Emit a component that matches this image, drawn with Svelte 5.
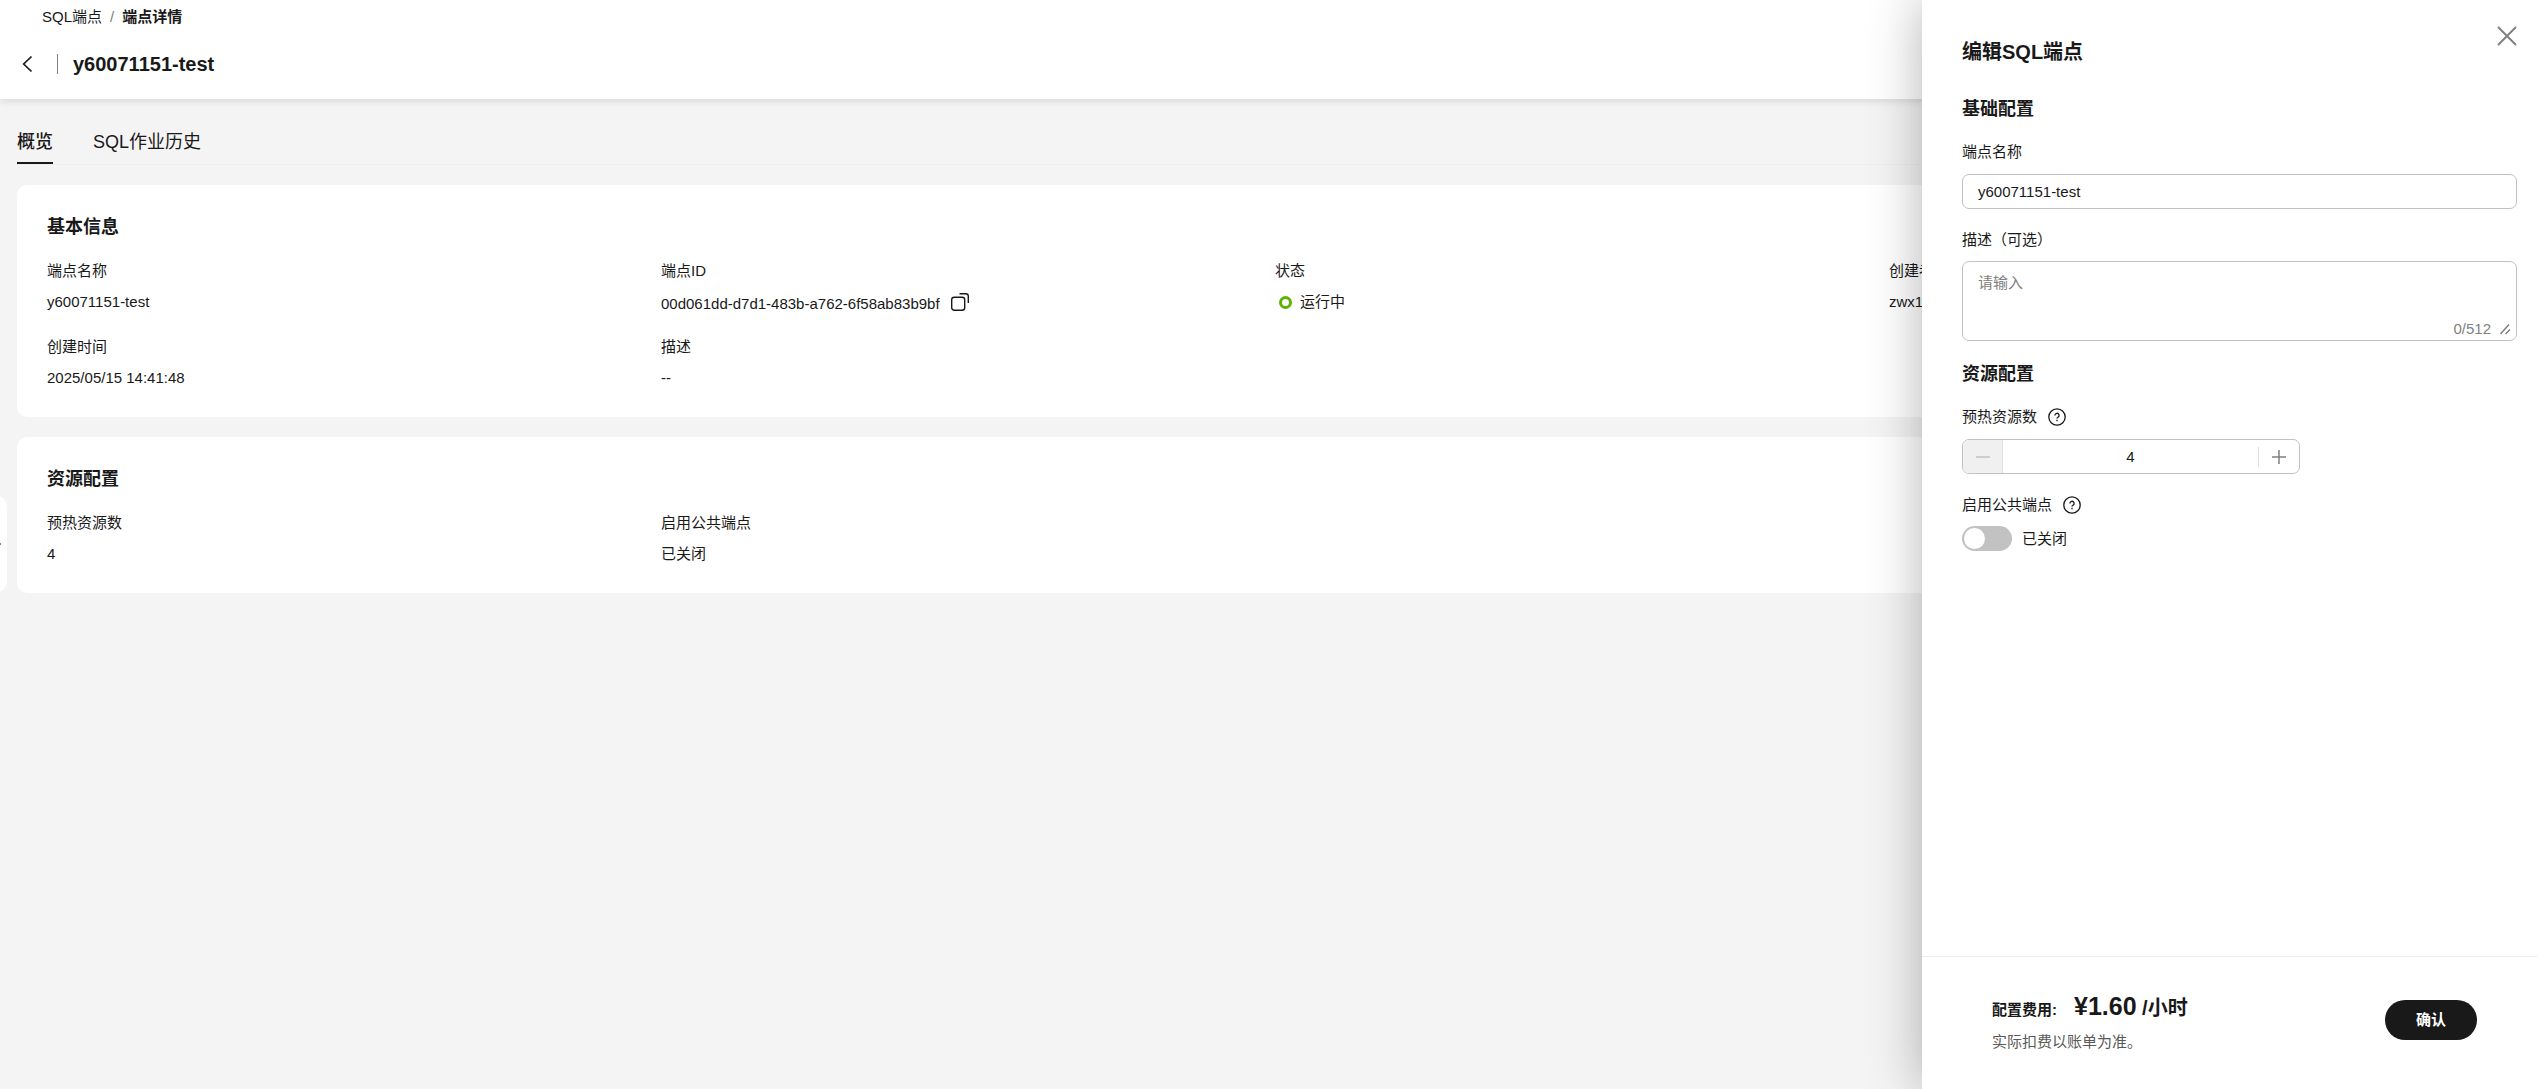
<script>
    let name = $state('y60071151-test')
    let description = $state('')
    let count = $state(4)
    let isPublic = $state(false)

    const info = [
        { label: '端点名称', value: 'y60071151-test' },
        { label: '端点ID', value: '00d061dd-d7d1-483b-a762-6f58ab83b9bf', copy: true },
        { label: '状态', value: '运行中', status: true },
        { label: '创建者', value: 'zwx1' },
        { label: '创建时间', value: '2025/05/15 14:41:48' },
        { label: '描述', value: '--' },
    ]
    const resources = [
        { label: '预热资源数', value: '4' },
        { label: '启用公共端点', value: '已关闭' },
    ]
</script>

{#snippet help()}
    <button type="button" class="icon-btn" aria-label="帮助">
        <svg width="18" height="18" viewBox="0 0 18 18" fill="none" stroke="#191919" stroke-width="1.3">
            <circle cx="9" cy="9" r="8.2" />
            <path d="M6.9 7.4a2.1 2.1 0 1 1 3.1 1.8c-.7.4-1 .7-1 1.4" />
            <path d="M9 11.8v1.4" />
        </svg>
    </button>
{/snippet}

{#snippet fields(items)}
    <dl class="fields">
        {#each items as item}
            <div class="field">
                <dt>{item.label}</dt>
                <dd class:with-copy={item.copy}>
                    {#if item.status}<span class="dot"></span>{/if}
                    <span>{item.value}</span>
                    {#if item.copy}
                        <button type="button" class="icon-btn" aria-label="复制">
                            <svg width="20" height="20" viewBox="0 0 20 20" fill="none" stroke="#191919" stroke-width="1.4">
                                <rect x="1.7" y="5.2" width="13" height="13" rx="2.5" />
                                <path d="M9.5 1.7h6.3a2.5 2.5 0 0 1 2.5 2.500V11" />
                            </svg>
                        </button>
                    {/if}
                </dd>
            </div>
        {/each}
    </dl>
{/snippet}

<div class="page">
    <header>
        <nav class="crumbs">
            <a href="#list">SQL端点</a>
            <span class="slash">/</span>
            <strong>端点详情</strong>
        </nav>
        <div class="title">
            <button type="button" class="icon-btn" aria-label="返回">
                <svg width="20" height="20" viewBox="0 0 20 20" fill="none" stroke="#191919" stroke-width="1.7">
                    <path d="M15.5 2.500L7.700 10l7.800 7.500" />
                </svg>
            </button>
            <span class="bar"></span>
            <h1>y60071151-test</h1>
        </div>
    </header>

    <main>
        <div class="tabs">
            <button type="button" class="tab active">概览</button>
            <button type="button" class="tab">SQL作业历史</button>
        </div>
        <section class="card">
            <h2>基本信息</h2>
            {@render fields(info)}
        </section>
        <section class="card">
            <h2>资源配置</h2>
            {@render fields(resources)}
        </section>
    </main>

    <button type="button" class="handle" aria-label="展开"><span></span></button>

    <aside>
        <button type="button" class="icon-btn close" aria-label="关闭">
            <svg width="20" height="20" viewBox="0 0 20 20" fill="none" stroke="#808080" stroke-width="2">
                <path d="M1 1l18 18M19 1L1 19" />
            </svg>
        </button>
        <form>
            <h1>编辑SQL端点</h1>
            <h2>基础配置</h2>
            <label for="name">端点名称</label>
            <input id="name" class="text" type="text" bind:value={name} />
            <label for="description">描述（可选）</label>
            <div class="area">
                <textarea id="description" maxlength="512" placeholder="请输入" bind:value={description}></textarea>
                <div class="counter">
                    <span>{description.length}/512</span>
                    <svg width="12" height="12" viewBox="0 0 12 12" stroke="#808080" stroke-width="1.5">
                        <path d="M1.500 11L10 1.500M6.500 11L11 6.500" />
                    </svg>
                </div>
            </div>
            <h2>资源配置</h2>
            <div class="label-row">
                <label for="count">预热资源数</label>
                {@render help()}
            </div>
            <div class="spinner">
                <button type="button" class="minus" aria-label="减少" disabled>
                    <svg width="14" height="14" viewBox="0 0 14 14" stroke="#c2c2c2" stroke-width="1.5">
                        <path d="M0 7h14" />
                    </svg>
                </button>
                <input id="count" type="text" inputmode="numeric" bind:value={count} />
                <span class="divider"></span>
                <button type="button" aria-label="增加" onclick={() => count++}>
                    <svg width="14" height="14" viewBox="0 0 14 14" stroke="#808080" stroke-width="1.5">
                        <path d="M0 7h14M7 0v14" />
                    </svg>
                </button>
            </div>
            <div class="label-row">
                <label for="public">启用公共端点</label>
                {@render help()}
            </div>
            <div class="switch-row">
                <input id="public" class="switch" type="checkbox" role="switch" bind:checked={isPublic} />
                <span>{isPublic ? '已开启' : '已关闭'}</span>
            </div>
        </form>
        <footer>
            <div>
                <div class="price">
                    <span class="price-label">配置费用:</span>
                    <span><span class="amount">¥1.60</span> /小时</span>
                </div>
                <p>实际扣费以账单为准。</p>
            </div>
            <button type="button" class="confirm">确认</button>
        </footer>
    </aside>
</div>

<style>
    :global(body) {
        background: #f4f4f4;
    }
    .page {
        min-height: 100vh;
        overflow: hidden;
        position: relative;
        color: #191919;
        font-family: 'Liberation Sans', 'Noto Sans CJK SC', sans-serif;
        font-size: 15px;
        line-height: 22px;
    }
    .page * {
        box-sizing: border-box;
    }
    button,
    input,
    textarea {
        font: inherit;
        color: inherit;
        border: none;
        background: none;
        padding: 0;
        margin: 0;
        outline: none;
    }
    button {
        cursor: pointer;
    }
    svg {
        display: block;
    }
    h1,
    h2,
    p,
    dl,
    dd {
        margin: 0;
    }
    h1 {
        font-size: 20px;
        line-height: 30px;
    }
    h2 {
        font-size: 18px;
        line-height: 28px;
    }
    header {
        height: 99px;
        padding: 6px 16px 0;
        background: #fff;
        box-shadow: 0 2px 8px rgba(0, 0, 0, 0.12);
        position: relative;
    }
    .crumbs {
        display: flex;
        gap: 8px;
        padding-left: 26px;
    }
    .crumbs a {
        color: inherit;
        text-decoration: none;
    }
    .slash {
        color: #808080;
    }
    .title {
        display: flex;
        align-items: center;
        margin-top: 21px;
    }
    .bar {
        width: 1px;
        height: 20px;
        margin: 0 15px 0 21px;
        background: #808080;
    }
    main {
        padding: 20px 17px;
    }
    .tabs {
        display: flex;
        gap: 40px;
        border-bottom: 1px solid #eee;
    }
    .tab {
        font-size: 18px;
        line-height: 28px;
        padding: 9px 0 6px;
        border-bottom: 2px solid transparent;
    }
    .tab.active {
        font-weight: 500;
        border-bottom-color: #191919;
    }
    .card {
        margin-top: 20px;
        padding: 28px 18px 27px 30px;
        background: #fff;
        border-radius: 10px;
    }
    .fields {
        display: grid;
        grid-template-columns: repeat(4, 1fr);
        row-gap: 18px;
        margin-top: 19px;
    }
    .field dt {
        margin-bottom: 8px;
    }
    .field dd {
        display: flex;
        align-items: center;
        min-height: 24px;
    }
    .field .with-copy {
        min-height: 28px;
    }
    .field .icon-btn {
        align-self: flex-start;
        margin: 2px 0 0 10px;
    }
    .dot {
        width: 13px;
        height: 13px;
        margin: 0 8px 0 4px;
        border: 3px solid #5cb300;
        border-radius: 50%;
    }
    .handle {
        position: absolute;
        left: -13px;
        top: 496px;
        width: 20px;
        height: 96px;
        border-radius: 12px;
        background: #fff;
    }
    .handle span {
        display: block;
        width: 2px;
        height: 2px;
        margin-left: 12px;
        background: #808080;
    }
    aside {
        position: absolute;
        top: 0;
        right: 0;
        bottom: 0;
        width: 616px;
        display: flex;
        flex-direction: column;
        background: #fff;
        box-shadow: 0 0 50px rgba(0, 0, 0, 0.3);
    }
    .close {
        position: absolute;
        top: 26px;
        right: 21px;
    }
    form {
        flex: 1;
        padding: 37px 21px 0 40px;
    }
    form h2 {
        margin: 28px 0 18px;
    }
    form label {
        display: block;
    }
    .text {
        width: 100%;
        height: 35px;
        margin: 11px 0 20px;
        padding: 0 15px;
        border: 1px solid #c2c2c2;
        border-radius: 7px;
    }
    .area {
        height: 80px;
        margin-top: 10px;
        border: 1px solid #c2c2c2;
        border-radius: 7px;
        position: relative;
    }
    textarea {
        display: block;
        width: 100%;
        height: 50px;
        padding: 10px 15px 0;
        resize: none;
    }
    textarea::placeholder {
        color: #808080;
    }
    .counter {
        position: absolute;
        right: 5px;
        bottom: 0;
        display: flex;
        align-items: center;
        gap: 8px;
        color: #808080;
    }
    .area + h2 {
        margin-top: 19px;
    }
    .label-row {
        display: flex;
        align-items: center;
        gap: 11px;
    }
    .spinner {
        display: flex;
        align-items: center;
        width: 338px;
        height: 35px;
        margin: 11px 0 20px;
        border: 1px solid #c2c2c2;
        border-radius: 7px;
        overflow: hidden;
    }
    .spinner button {
        display: grid;
        place-items: center;
        width: 40px;
        height: 100%;
    }
    .spinner .minus {
        background: #f0f0f0;
        border-right: 1px solid #dfdfdf;
    }
    .spinner input {
        flex: 1;
        min-width: 0;
        text-align: center;
    }
    .divider {
        width: 1px;
        height: 20px;
        background: #dfdfdf;
    }
    .switch-row {
        display: flex;
        align-items: center;
        gap: 10px;
        margin-top: 10px;
    }
    .switch {
        appearance: none;
        width: 50px;
        height: 25px;
        padding: 2px;
        border-radius: 13px;
        background: #c2c2c2;
    }
    .switch::before {
        content: '';
        display: block;
        width: 21px;
        height: 21px;
        border-radius: 50%;
        background: #fff;
    }
    .switch:checked {
        background: #191919;
    }
    .switch:checked::before {
        margin-left: auto;
    }
    footer {
        display: flex;
        justify-content: space-between;
        align-items: center;
        height: 133px;
        padding: 0 61px 6px 70px;
        border-top: 1px solid #eee;
    }
    .price {
        display: flex;
        align-items: baseline;
        gap: 17px;
        font-size: 20px;
        line-height: 36px;
        font-weight: bold;
    }
    .price-label {
        font-size: 15px;
    }
    .amount {
        font-size: 25px;
    }
    footer p {
        margin-top: 3px;
        color: #595959;
    }
    .confirm {
        width: 92px;
        height: 40px;
        border-radius: 20px;
        background: #191919;
        color: #fff;
        font-weight: bold;
    }
</style>
